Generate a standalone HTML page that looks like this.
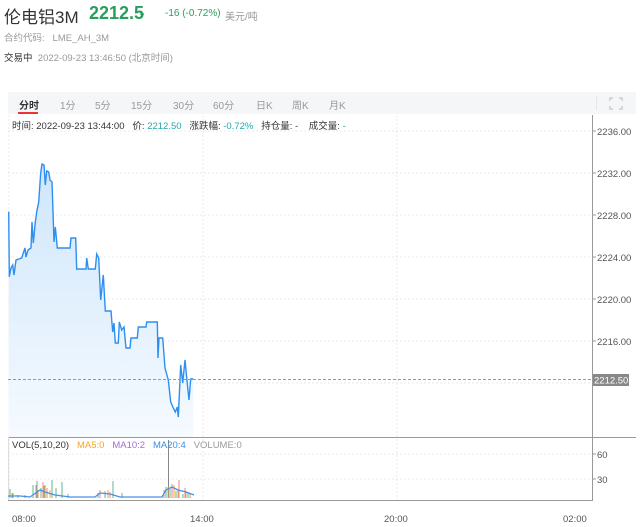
<!DOCTYPE html>
<html><head><meta charset="utf-8"><style>
body{margin:0;width:640px;height:527px;background:#fff;font-family:"Liberation Sans","Noto Sans CJK SC",sans-serif;position:relative;overflow:hidden}
.a{position:absolute;white-space:nowrap}
</style></head><body>
<div class="a" style="left:4px;top:3px;font-size:17px;color:#333">伦电铝3M</div>
<div class="a" style="left:89px;top:3px;font-size:18px;font-weight:bold;color:#2a9d5c">2212.5</div>
<div class="a" style="left:138px;top:8px;font-size:10px;color:#2a9d5c">⌄</div>
<div class="a" style="left:165px;top:8px;font-size:10px;color:#2a9d5c">-16 (-0.72%)</div>
<div class="a" style="left:225px;top:8px;font-size:10px;color:#999">美元/吨</div>
<div class="a" style="left:4px;top:30px;font-size:9.5px;color:#999">合约代码: &nbsp; LME_AH_3M</div>
<div class="a" style="left:4px;top:50px;font-size:9.5px;color:#333">交易中 <span style="color:#999">&nbsp;2022-09-23 13:46:50 (北京时间)</span></div>
<div class="a" style="left:8px;top:92px;width:628px;height:22px;background:#f5f6f8"></div>
<div class="a" style="top:97px;font-size:10px;color:#999;left:0;width:400px">
<span class="a" style="left:19px;color:#333;font-weight:bold">分时</span><span class="a" style="left:60px">1分</span><span class="a" style="left:95px">5分</span><span class="a" style="left:131px">15分</span><span class="a" style="left:173px">30分</span><span class="a" style="left:213px">60分</span><span class="a" style="left:256px">日K</span><span class="a" style="left:292px">周K</span><span class="a" style="left:329px">月K</span></div>
<div class="a" style="left:18px;top:112px;width:20px;height:2px;background:#e33"></div>
<div class="a" style="left:596px;top:96px;width:1px;height:14px;background:#e6e6e6"></div>
<svg class="a" style="left:609px;top:97px" width="14" height="13"><path d="M1 4V1H4M10 1H13V4M13 9V12H10M4 12H1V9" fill="none" stroke="#bbb" stroke-width="1"/></svg>
<div class="a" style="left:12px;top:118px;font-size:9.5px;color:#333">时间: 2022-09-23 13:44:00 &nbsp; 价: <span style="color:#2aa">2212.50</span> &nbsp; 涨跌幅: <span style="color:#2aa">-0.72%</span> &nbsp; 持仓量: - &nbsp;&nbsp; 成交量: <span style="color:#2aa">-</span></div>
<svg class="a" style="left:0;top:0" width="640" height="527">
<defs><linearGradient id="g" x1="0" y1="0" x2="0" y2="1"><stop offset="0" stop-color="#cfe6fb"/><stop offset="1" stop-color="#f5faff"/></linearGradient></defs>
<g stroke="#e8e8e8" stroke-dasharray="2,2" stroke-width="1">
<line x1="8" y1="131" x2="593" y2="131"/><line x1="8" y1="173" x2="593" y2="173"/><line x1="8" y1="215" x2="593" y2="215"/><line x1="8" y1="257" x2="593" y2="257"/><line x1="8" y1="299" x2="593" y2="299"/><line x1="8" y1="341" x2="593" y2="341"/><line x1="8" y1="383" x2="593" y2="383"/>
<line x1="8" y1="454" x2="593" y2="454"/><line x1="8" y1="479" x2="593" y2="479"/>
<line x1="9" y1="115" x2="9" y2="500"/><line x1="203" y1="115" x2="203" y2="500"/><line x1="397" y1="115" x2="397" y2="500"/>
</g>
<path d="M8.7,211.7 L9.3,276.7 11,268 12.7,265 14,275 16,260 21.7,258 23.3,253 25,248 26,257 28,250 31,248 32,222 33.3,243 35.3,222 36.7,212 38.7,202 40.7,173 42,164 44,165 45.3,185 46.7,171 48.7,172 50,180 52,182 54,242 55.3,227 57.3,248 70,248 71,238 75.7,238 76.7,269 86,269 86.7,258 88.3,269 95.3,269 96.7,254 98.7,258 100.7,300 103.3,275 105.3,311 111,311 112.7,332 114,323 115.3,343 118.3,343 119.3,322 121.7,330 124,327 126,348 130,348 131,338 137.3,338 138.3,327 146,327 146.7,322 157.3,322 158,358 159,338 162.7,338 165,368 168.3,380 170.7,402 173.3,408 175.3,412 177.3,407 178.3,417 180.7,365 182.7,383 185,360 186.7,378 189,400 190.7,379 193.3,379 L193.3,437 L8.7,437Z" fill="url(#g)"/>
<path d="M8.7,211.7 L9.3,276.7 11,268 12.7,265 14,275 16,260 21.7,258 23.3,253 25,248 26,257 28,250 31,248 32,222 33.3,243 35.3,222 36.7,212 38.7,202 40.7,173 42,164 44,165 45.3,185 46.7,171 48.7,172 50,180 52,182 54,242 55.3,227 57.3,248 70,248 71,238 75.7,238 76.7,269 86,269 86.7,258 88.3,269 95.3,269 96.7,254 98.7,258 100.7,300 103.3,275 105.3,311 111,311 112.7,332 114,323 115.3,343 118.3,343 119.3,322 121.7,330 124,327 126,348 130,348 131,338 137.3,338 138.3,327 146,327 146.7,322 157.3,322 158,358 159,338 162.7,338 165,368 168.3,380 170.7,402 173.3,408 175.3,412 177.3,407 178.3,417 180.7,365 182.7,383 185,360 186.7,378 189,400 190.7,379 193.3,379" fill="none" stroke="#2d8ff0" stroke-width="1.4"/>
<line x1="8" y1="379.5" x2="593" y2="379.5" stroke="#999" stroke-dasharray="3,2"/>
<line x1="8" y1="437.5" x2="636" y2="437.5" stroke="#999"/>
<line x1="8" y1="500.5" x2="593" y2="500.5" stroke="#999"/>
<line x1="592.5" y1="115" x2="592.5" y2="500" stroke="#999"/>
<line x1="8.5" y1="437" x2="8.5" y2="500" stroke="#ddd"/>
<g stroke="#999"><line x1="593" y1="131" x2="596" y2="131"/><line x1="593" y1="173" x2="596" y2="173"/><line x1="593" y1="215" x2="596" y2="215"/><line x1="593" y1="257" x2="596" y2="257"/><line x1="593" y1="299" x2="596" y2="299"/><line x1="593" y1="341" x2="596" y2="341"/><line x1="593" y1="454" x2="596" y2="454"/><line x1="593" y1="479" x2="596" y2="479"/></g>
<g font-size="9.5" fill="#555"><text x="597" y="135">2236.00</text><text x="597" y="177">2232.00</text><text x="597" y="219">2228.00</text><text x="597" y="261">2224.00</text><text x="597" y="303">2220.00</text><text x="597" y="345">2216.00</text><text x="597" y="458">60</text><text x="597" y="483">30</text></g>
<rect x="593" y="374" width="36" height="12" fill="#888"/><text x="594" y="383.5" font-size="9.5" fill="#fff">2212.50</text>
<line x1="168.5" y1="440" x2="168.5" y2="498" stroke="#888"/>
<g stroke-width="1">
<path d="M10 498V489M13 498V493M18 498V495M25 498V495M33 498V485M37 498V481M41 498V488M45 498V485M52 498V480M56 498V488M62 498V482M68 498V494M98 498V493M105 498V491M113 498V481M122 498V493M166 498V487M170 498V489M176 498V491M183 498V494M188 498V492" stroke="#5bb89c"/>
<path d="M36 498V485M43 498V482M47 498V488M100 498V490M110 498V492M164 498V490M172 498V484M179 498V480M185 498V488M190 498V493" stroke="#f08080"/>
<path d="M12 498V493M38 498V490M44 498V486M50 498V490M108 498V490M168 498V487M174 498V485M178 498V490M186 498V491" stroke="#f5a623"/>
<path d="M8 496L20 496L30 497L40 490L45 492L55 495L70 497L95 497L100 493L110 494L120 497L162 497L166 490L172 487L178 490L186 492L194 495" fill="none" stroke="#4a90e2" stroke-width="1.3"/>
</g>
<g font-size="9.5" fill="#555"><text x="12" y="522">08:00</text><text x="190" y="522">14:00</text><text x="384" y="522">20:00</text><text x="563" y="522">02:00</text></g>
</svg>
<div class="a" style="left:12px;top:440px;font-size:9.5px;color:#333">VOL(5,10,20) &nbsp; <span style="color:#f5a623">MA5:0</span> &nbsp; <span style="color:#a56bd6">MA10:2</span> &nbsp; <span style="color:#3a8ee6">MA20:4</span> &nbsp; <span style="color:#999">VOLUME:0</span></div>
</body></html>
